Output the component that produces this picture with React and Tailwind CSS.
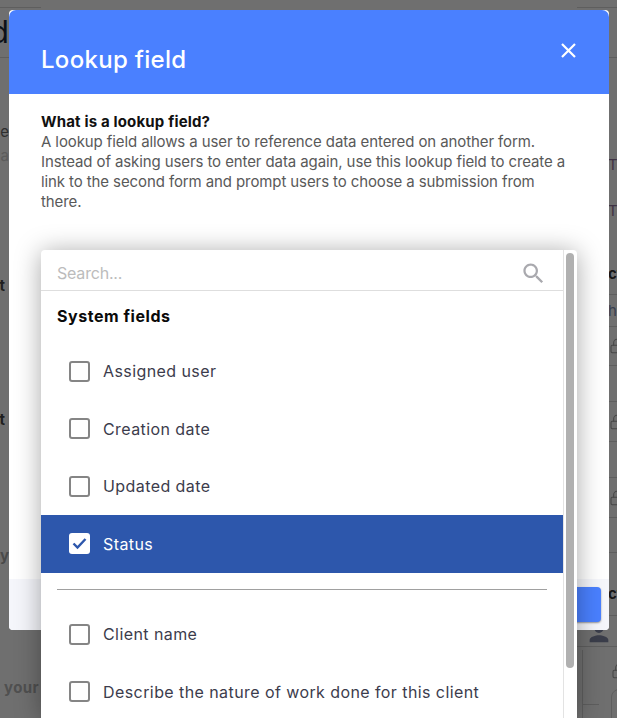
import React from 'react';
import { Lock } from 'lucide-react';

const leftRows = [
  { h: 'h-[8px]', line: true },
  { h: 'h-[50px]', line: true, text: 'd', cls: 'w-[9px] justify-end text-[31px] text-[#0c1118]' },
  { h: 'h-[62px]' },
  { h: 'h-[24px]', text: 'ace', cls: 'w-[9px] justify-end text-[15px] text-[#2e2e2e]' },
  { h: 'h-[24px]', text: 'l a', cls: 'w-[9px] justify-end text-[15px] text-[#5c5c5c]' },
  { h: 'h-[106px]' },
  { h: 'h-[24px]', text: 'at', cls: 'w-[5px] justify-end text-[15px] font-bold text-[#1f1f1f]' },
  { h: 'h-[110px]' },
  { h: 'h-[24px]', text: 'at', cls: 'w-[5px] justify-end text-[15px] font-bold text-[#1f1f1f]' },
  { h: 'h-[112px]' },
  { h: 'h-[24px]', text: 'y', cls: 'w-[9px] justify-end text-[15px] font-bold text-[#4a4a4a]' },
  { h: 'h-[108px]' },
  { h: 'h-[24px]', text: 'your', cls: 'w-[41px] pl-[4px] text-[15px] font-bold tracking-[0.4px] text-[#505050]' },
];

const rightRows = [
  { h: 'h-[8px]', line: true },
  { h: 'h-[50px]', line: true },
  { h: 'h-[95px]' },
  { h: 'h-[24px]', text: 'T', cls: 'text-[#3f3344]' },
  { h: 'h-[22px]' },
  { h: 'h-[24px]', text: 'T', cls: 'text-[#3f3344]' },
  { h: 'h-[40px]' },
  { h: 'h-[32px]', line: true, text: 'ct', cls: 'pb-[8px] font-bold text-[#161616]' },
  { h: 'h-[32px]', line: true, text: 'h', cls: 'pt-[2px] text-[#39404f]' },
  { h: 'h-[39px]', line: true, lock: true },
  { h: 'h-[36px]', line: true },
  { h: 'h-[40px]', line: true, lock: true },
  { h: 'h-[36px]', line: true },
  { h: 'h-[40px]', line: true, lock: true },
  { h: 'h-[35px]', line: true },
  { h: 'h-[63px]', line: true, text: 'ct', cls: 'pt-[21px] font-bold text-[#161616]' },
];

const systemFields = [
  { label: 'Assigned user' },
  { label: 'Creation date' },
  { label: 'Updated date' },
  { label: 'Status', checked: true },
];

const formFields = [
  { label: 'Client name' },
  { label: 'Describe the nature of work done for this client' },
];

function BackgroundLeft() {
  return (
    <div className="flex w-[41px] shrink-0 flex-col">
      {leftRows.map((row, i) => (
        <div key={i} className={`${row.h} ${row.line ? 'border-b border-[#5e5e5e]' : ''} shrink-0`}>
          {row.text && (
            <div className={`flex h-full items-center overflow-hidden whitespace-nowrap ${row.cls}`}>{row.text}</div>
          )}
        </div>
      ))}
    </div>
  );
}

function BackgroundRight() {
  return (
    <div className="flex w-[40px] shrink-0 flex-col text-[15px]">
      {rightRows.map((row, i) => (
        <div key={i} className={`${row.h} ${row.line ? 'border-b border-[#5e5e5e]' : ''} flex shrink-0 items-center pl-[31px]`}>
          {row.text && <span className={row.cls}>{row.text}</span>}
          {row.lock && <Lock size={16} strokeWidth={1.6} className="ml-[1px] shrink-0 text-[#474747]" />}
        </div>
      ))}
      <div className="h-[31px] shrink-0 border-b border-[#5e5e5e] pl-[8px] pt-[3px]">
        <svg width="28" height="28" viewBox="0 0 24 24" fill="#3a3d4a">
          <path d="M12 12c2.21 0 4-1.79 4-4s-1.79-4-4-4-4 1.79-4 4 1.79 4 4 4zm0 2c-2.67 0-8 1.34-8 4v2h16v-2c0-2.66-5.33-4-8-4z" />
        </svg>
      </div>
      <div className="flex flex-1 pl-[5px] pt-[3px]">
        <div className="flex w-full border-l border-[#5e5e5e]">
          <div className="h-[55px] w-[16px] shrink-0 border-b border-[#5e5e5e]" />
          <div className="flex flex-col pl-[12px] pt-[13px]">
            <Lock size={16} strokeWidth={1.6} className="shrink-0 text-[#474747]" />
            <div className="mt-[10px] h-[40px] w-[30px] rounded-[8px] border border-[#5e5e5e]" />
          </div>
        </div>
      </div>
    </div>
  );
}

function FieldRow({ label, checked }) {
  return (
    <div className={`flex h-[57.5px] items-center gap-[13px] pl-[28px] ${checked ? 'bg-[#2d57ac] text-white' : 'text-[#3c3c4c]'}`}>
      {checked ? (
        <div className="flex h-[21px] w-[21px] shrink-0 items-center justify-center rounded-[3px] bg-white">
          <svg width="15" height="13" viewBox="0 0 15 13" fill="none" stroke="#2d57ac" strokeWidth="2.4">
            <path d="M1.5 6.5 5.5 10.5 13.5 2" />
          </svg>
        </div>
      ) : (
        <div className="h-[21px] w-[21px] shrink-0 rounded-[3px] border-2 border-[#858585]" />
      )}
      <span className="whitespace-nowrap text-[16px] tracking-[0.42px]">{label}</span>
    </div>
  );
}

function LookupDropdown() {
  return (
    <div className="absolute left-[32px] top-[240px] flex h-[468px] w-[536px] overflow-hidden rounded-t-[4px] bg-white shadow-[0_2px_26px_rgba(0,0,0,0.35)]">
      <div className="w-[523px] shrink-0 border-r border-[#e3e3e3]">
        <div className="flex h-[41px] items-center justify-between border-b border-[#dedede] pl-[16px] pr-[16px]">
          <input
            placeholder="Search..."
            className="mt-[6px] w-[300px] bg-transparent text-[16px] tracking-[-0.2px] outline-none placeholder:text-[#bcbcbc]"
          />
          <svg width="27" height="27" viewBox="0 0 24 24" fill="#a9a9ae" className="mt-[6px]">
            <path d="M15.5 14h-.79l-.28-.27C15.41 12.59 16 11.11 16 9.5 16 5.91 13.09 3 9.5 3S3 5.91 3 9.5 5.91 16 9.5 16c1.61 0 3.09-.59 4.23-1.57l.27.28v.79l5 4.99L20.49 19l-4.99-5zm-6 0C7.01 14 5 11.99 5 9.5S7.01 5 9.5 5 14 7.01 14 9.5 11.99 14 9.5 14z" />
          </svg>
        </div>
        <div className="flex h-[51.6px] items-start pl-[16px] pt-[15px] text-[16px] font-bold leading-[20px] tracking-[0.55px] text-[#0a0a0a]">
          System fields
        </div>
        {systemFields.map((field) => (
          <FieldRow key={field.label} label={field.label} checked={field.checked} />
        ))}
        <div className="mb-[16px] ml-[16px] mr-[16px] mt-[16px] h-[1px] bg-[#a0a0a0]" />
        {formFields.map((field) => (
          <FieldRow key={field.label} label={field.label} />
        ))}
      </div>
      <div className="flex-1 pl-[2px] pr-[3px] pt-[3px]">
        <div className="h-[415px] w-[8px] rounded-full bg-[#b0b0b0]" />
      </div>
    </div>
  );
}

export default function App() {
  return (
    <div className="relative flex h-[718px] w-[617px] justify-between overflow-hidden bg-[#6f6f6f] font-['Inter','Liberation_Sans',sans-serif]">
      <BackgroundLeft />
      <BackgroundRight />

      <div className="absolute left-[9px] top-[10px] flex h-[620px] w-[600px] flex-col rounded-[4px] bg-white">
        <div className="flex h-[84px] shrink-0 items-start justify-between rounded-t-[7px] bg-[#4a80ff] pl-[32px] pr-[33px]">
          <h2 className="pt-[35px] text-[24px] font-medium leading-[30px] tracking-[0.3px] text-white">Lookup field</h2>
          <button className="mt-[33px] text-white">
            <svg width="15" height="15" viewBox="0 0 15 15" fill="none" stroke="currentColor" strokeWidth="2.2" className="block">
              <path d="M1 1 14 14M14 1 1 14" />
            </svg>
          </button>
        </div>
        <div className="flex-1 px-[32px] pt-[18px] text-[15px] leading-[20px]">
          <div className="font-bold tracking-[0.16px] text-[#111111]">What is a lookup field?</div>
          <p className="tracking-[-0.1px] text-[#595959]">
            A lookup field allows a user to reference data entered on another form.<br />
            Instead of asking users to enter data again, use this lookup field to create a<br />
            link to the second form and prompt users to choose a submission from<br />
            there.
          </p>
        </div>
        <div className="flex h-[51px] shrink-0 justify-end rounded-b-[4px] bg-[#f5f6fb] p-[8px]">
          <button className="h-[35px] w-[130px] rounded-[4px] bg-[#4a80ff] shadow-[0_1px_2px_rgba(0,0,0,0.4)]" />
        </div>
        <LookupDropdown />
      </div>
    </div>
  );
}
